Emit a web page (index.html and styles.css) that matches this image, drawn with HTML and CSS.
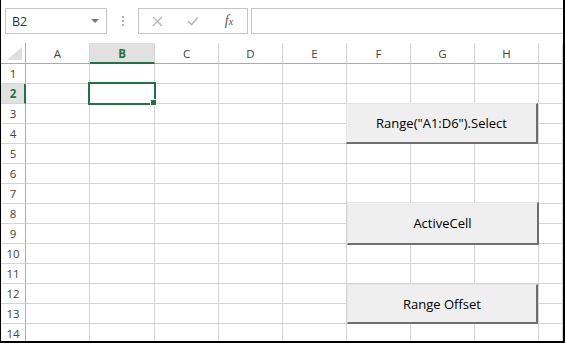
FILE: index.html
```html
<!DOCTYPE html>
<html lang="en">
<head>
  <meta charset="UTF-8">
  <title>Range Select</title>
  <link rel="stylesheet" href="styles.css">
</head>
<body>
  <div class="frame">
    <div class="toolbar">
      <div class="namebox">
        <span>B2</span>
        <span class="caret"></span>
      </div>
      <div class="grip"><i></i><i></i><i></i></div>
      <div class="fxbox">
        <span class="tool">
          <svg width="11" height="11" viewBox="0 0 11 11"><path d="M1 1L10 10M10 1L1 10" stroke="#b8b8b8" stroke-width="1.4" fill="none"/></svg>
        </span>
        <span class="tool">
          <svg width="12" height="10" viewBox="0 0 12 10"><path d="M1 5L4.5 8.5L11 1.5" stroke="#b8b8b8" stroke-width="1.6" fill="none"/></svg>
        </span>
        <span class="tool fx">f<small>x</small></span>
      </div>
      <div class="formula"></div>
    </div>

    <div class="sheet">
      <div class="head corner"><span class="tri"></span></div>
      <div class="head">A</div><div class="head active">B</div><div class="head">C</div><div class="head">D</div><div class="head">E</div><div class="head">F</div><div class="head">G</div><div class="head">H</div><div class="head"></div>

      <div class="rh">1</div><span></span><span></span><span></span><span></span><span></span><span></span><span></span><span></span><span></span>
      <div class="rh active">2</div><span></span><span></span><span></span><span></span><span></span><span></span><span></span><span></span><span></span>
      <div class="rh">3</div><span></span><span></span><span></span><span></span><span></span><span></span><span></span><span></span><span></span>
      <div class="rh">4</div><span></span><span></span><span></span><span></span><span></span><span></span><span></span><span></span><span></span>
      <div class="rh">5</div><span></span><span></span><span></span><span></span><span></span><span></span><span></span><span></span><span></span>
      <div class="rh">6</div><span></span><span></span><span></span><span></span><span></span><span></span><span></span><span></span><span></span>
      <div class="rh">7</div><span></span><span></span><span></span><span></span><span></span><span></span><span></span><span></span><span></span>
      <div class="rh">8</div><span></span><span></span><span></span><span></span><span></span><span></span><span></span><span></span><span></span>
      <div class="rh">9</div><span></span><span></span><span></span><span></span><span></span><span></span><span></span><span></span><span></span>
      <div class="rh">10</div><span></span><span></span><span></span><span></span><span></span><span></span><span></span><span></span><span></span>
      <div class="rh">11</div><span></span><span></span><span></span><span></span><span></span><span></span><span></span><span></span><span></span>
      <div class="rh">12</div><span></span><span></span><span></span><span></span><span></span><span></span><span></span><span></span><span></span>
      <div class="rh">13</div><span></span><span></span><span></span><span></span><span></span><span></span><span></span><span></span><span></span>
      <div class="rh">14</div><span></span><span></span><span></span><span></span><span></span><span></span><span></span><span></span><span></span>

      <!-- celda activa B2 -->
      <div class="selection"><span class="handle"></span></div>

      <!-- botones ActiveX -->
      <button class="cmd cmd-select">Range("A1:D6").Select</button>
      <button class="cmd cmd-active">ActiveCell</button>
      <button class="cmd cmd-offset">Range Offset</button>
    </div>
  </div>
</body>
</html>
```

FILE: styles.css
```css
body {
  margin: 0;
  padding: 0;
  font-family: 'Open Sans', 'Noto Sans', sans-serif;
  background: #fff;
}

.frame {
  width: 565px;
  height: 343px;
  box-sizing: border-box;
  border-left: 1px solid #000;
  border-right: 2px solid #000;
  border-bottom: 2px solid #000;
  overflow: hidden;
  background: #fff;
}

/* Barra de fórmulas */
.toolbar {
  height: 43px;
  box-sizing: border-box;
  padding: 8px 0 0 4px;
  display: flex;
  align-items: flex-start;
}

.namebox {
  width: 102px;
  height: 26px;
  box-sizing: border-box;
  border: 1px solid #c6c6c6;
  display: flex;
  align-items: center;
  justify-content: space-between;
  padding: 0 6px 0 6px;
  font-size: 12.5px;
  color: #333;
}

.caret {
  width: 0;
  height: 0;
  border-left: 4px solid transparent;
  border-right: 4px solid transparent;
  border-top: 4px solid #777;
  margin-right: 1px;
}

.grip {
  width: 31px;
  height: 26px;
  display: flex;
  flex-direction: column;
  align-items: center;
  justify-content: center;
  gap: 2px;
}

.grip i {
  width: 2px;
  height: 2px;
  background: #b0b0b0;
}

.fxbox {
  width: 110px;
  height: 26px;
  box-sizing: border-box;
  border: 1px solid #c6c6c6;
  display: flex;
  align-items: center;
}

.tool {
  width: 36px;
  display: flex;
  justify-content: center;
  align-items: center;
}

.fx {
  font-family: 'Liberation Serif', serif;
  font-style: italic;
  font-size: 14px;
  color: #555;
}

.fx small {
  font-size: 10px;
}

.formula {
  flex: 1;
  height: 26px;
  box-sizing: border-box;
  margin-left: 3px;
  border: 1px solid #c6c6c6;
  border-right: none;
}

/* Hoja */
.sheet {
  position: relative;
  display: grid;
  grid-template-columns: 25px 64px 65px repeat(6, 64px) 1fr;
  grid-template-rows: 21px;
  grid-auto-rows: 20px;
}

.sheet span {
  border-right: 1px solid #d4d4d4;
  border-bottom: 1px solid #d4d4d4;
}

.head {
  box-sizing: border-box;
  border-right: 1px solid #d4d4d4;
  border-bottom: 1px solid #ababab;
  display: flex;
  align-items: center;
  justify-content: center;
  font-size: 11.5px;
  color: #444;
}

.head.active {
  background: #e1e1e1;
  color: #217346;
  font-weight: bold;
  border-bottom: 2px solid #217346;
  padding-top: 1px;
}

.corner {
  position: relative;
  border-right-color: #ababab;
}

.corner .tri {
  position: absolute;
  right: 3px;
  bottom: 3px;
  width: 0;
  height: 0;
  border: none;
  border-left: 15px solid transparent;
  border-bottom: 13px solid #dfdfdf;
}

.rh {
  box-sizing: border-box;
  border-right: 1px solid #ababab;
  border-bottom: 1px solid #d4d4d4;
  display: flex;
  align-items: center;
  justify-content: center;
  font-size: 11.5px;
  color: #444;
}

.rh.active {
  background: #e1e1e1;
  color: #217346;
  font-weight: bold;
  border-right: 2px solid #217346;
  padding-left: 1px;
}

.selection {
  position: absolute;
  left: 87px;
  top: 39px;
  width: 68px;
  height: 23px;
  box-sizing: border-box;
  border: 2px solid #217346;
}

.selection .handle {
  position: absolute;
  right: -3px;
  bottom: -3px;
  width: 5px;
  height: 5px;
  background: #217346;
  border: 1px solid #fff;
}

/* Botones de comando */
.cmd {
  position: absolute;
  box-sizing: border-box;
  background: #efefef;
  border: 1px solid #e6e6e6;
  border-right: 2px solid #6e6e6e;
  border-bottom: 2px solid #6e6e6e;
  padding: 0;
  font-family: 'Open Sans', 'Noto Sans', sans-serif;
  font-size: 13px;
  color: #000;
}

.cmd-select {
  left: 345px;
  top: 60px;
  width: 192px;
  height: 41px;
}

.cmd-active {
  left: 346px;
  top: 159px;
  width: 192px;
  height: 43px;
}

.cmd-offset {
  left: 346px;
  top: 241px;
  width: 191px;
  height: 40px;
}
```
